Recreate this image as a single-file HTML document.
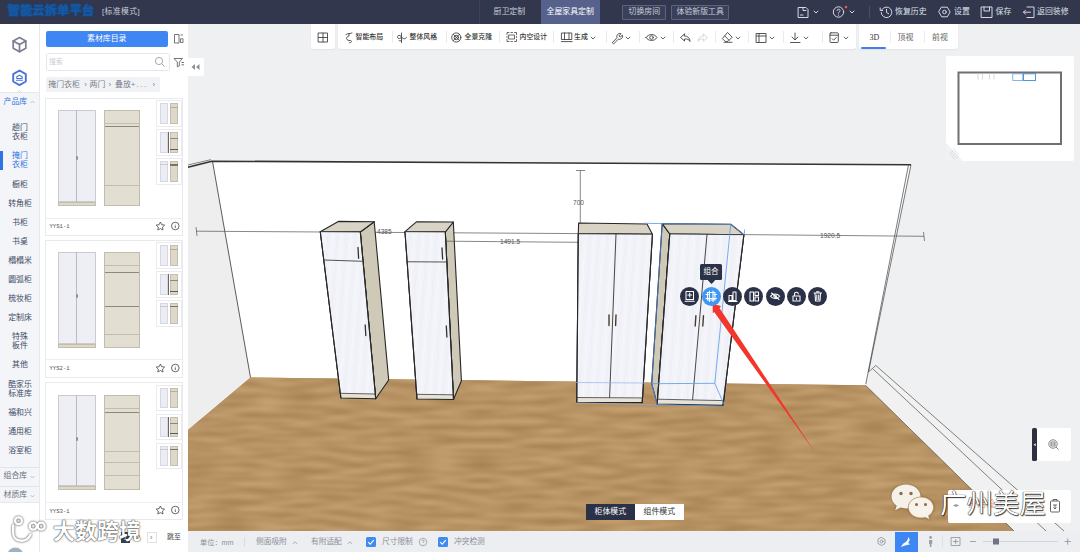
<!DOCTYPE html>
<html lang="zh-CN"><head><meta charset="utf-8"><title>全屋家具定制</title>
<style>
*{box-sizing:border-box;margin:0;padding:0}
html,body{width:1080px;height:552px;overflow:hidden}
body{position:relative;background:#eff0f2;font-family:"Liberation Sans","Noto Sans CJK SC",sans-serif;font-size:6.75px;color:#333;-webkit-text-size-adjust:none}
.abs{position:absolute}
.t{position:absolute;white-space:nowrap;line-height:1}
#hdr{position:absolute;left:0;top:0;width:1080px;height:24px;background:#32374d}
#hdr .t{color:#dfe2ea;font-size:7.9px}
#rail{position:absolute;left:0;top:24px;width:40px;height:528px;background:#fff;border-right:1px solid #e6e8ec}
#panel{position:absolute;left:40px;top:24px;width:148px;height:528px;background:#fff}
.ri{position:absolute;left:0;width:40px;text-align:center;font-size:7.9px;line-height:9.2px;color:#4a5168}
.card{position:absolute;left:5px;width:138px;border:1px solid #e8eaee;background:#fff}
.thumb{position:absolute;left:111px;width:26px;height:26px;border:1px solid #e4e6ea;background:#fff}
.tb{position:absolute;top:24px;height:25px;background:#fff;border-radius:0 0 3px 3px;box-shadow:0 1px 2px rgba(0,0,0,.06)}
.tb .t{font-size:6.9px;color:#333}
.sep{position:absolute;width:1px;background:#e9ebef}
#status{position:absolute;left:188px;top:531px;width:892px;height:21px;background:#eceef1}
#status .t{font-size:7.7px;color:#8a8f9a}
.cb{position:absolute;width:10px;height:10px;border-radius:1.5px;background:#3f8cf0}
.wm{position:absolute;white-space:nowrap;color:#fff;line-height:1}
</style></head><body>
<svg class="abs" style="left:0;top:0" width="1080" height="552" viewBox="0 0 1080 552">
<defs>
<filter id="wood" x="0" y="0" width="100%" height="100%" color-interpolation-filters="sRGB">
<feTurbulence type="fractalNoise" baseFrequency="0.028 0.16" numOctaves="1" seed="11"/>
<feColorMatrix type="matrix" values="0.18 0 0 0 0.628  0.18 0 0 0 0.482  0.18 0 0 0 0.298  0 0 0 0 1" />
<feComposite in2="SourceGraphic" operator="in"/>
</filter>
<linearGradient id="doorg" x1="0" y1="0" x2="1" y2="0">
<stop offset="0" stop-color="#eceef5"/><stop offset="0.5" stop-color="#f4f5fa"/><stop offset="1" stop-color="#eceef5"/>
</linearGradient>
<pattern id="wave" width="9" height="40" patternUnits="userSpaceOnUse" patternTransform="rotate(4)">
<rect width="9" height="40" fill="#f2f3f9"/>
<path d="M2 0c2 7-2 13 0 20s-2 13 0 20" fill="none" stroke="#edeff6" stroke-width="1.2"/>
<path d="M6.500 0c-2 6 2 14 0 20s2 14 0 20" fill="none" stroke="#f9f9fd" stroke-width="1"/>
</pattern>
</defs>
<!-- left wall -->
<polygon points="188,166 211.8,161.2 250.5,377.5 188,430" fill="#eeeeee"/>
<!-- back wall -->
<polygon points="212.5,161.3 911,164.8 867,377 865.5,385.5 250.5,377.5" fill="#ffffff"/>
<!-- right wall base / skirting -->
<polygon points="875.8,365.5 1064,531 1014,531 865.5,385.3 867,377" fill="#f1f1f2"/>
<!-- floor -->
<polygon id="floorp" points="250.5,377.5 865.5,385.3 1014,531 188,531 188,430" fill="#b8935f"/>
<polygon points="250.5,377.5 865.5,385.3 1014,531 188,531 188,430" fill="#b8935f" filter="url(#wood)"/>
<!-- wall outlines -->
<g fill="none" stroke="#333" stroke-width="1.2">
<polyline points="188,167.2 211.8,161.2 911,164.8" stroke-width="1.6" stroke-linejoin="round"/>
<line x1="212.5" y1="161.3" x2="250.5" y2="377.5" stroke-width=".8"/>
</g>
<g fill="none" stroke="#444" stroke-width="0.7">
<line x1="911" y1="164.8" x2="868.5" y2="372"/>
<line x1="908.5" y1="164.8" x2="865.8" y2="384"/>
</g>
<polyline points="188,165 211,159.6" fill="none" stroke="#555" stroke-width="0.7"/>
<g fill="none" stroke="#6a6a6a" stroke-width="0.85">
<line x1="875.8" y1="365.5" x2="1064" y2="531"/>
<line x1="873" y1="369" x2="1046" y2="531"/>
<line x1="865.5" y1="385.3" x2="1014" y2="531"/>
<line x1="875.8" y1="365.5" x2="868.5" y2="372"/>
</g>
<g stroke="#555" stroke-width="0.7" fill="none">
<line x1="196" y1="231.2" x2="578" y2="233.6"/>
<line x1="196" y1="227" x2="197" y2="236"/>
<line x1="744" y1="234.6" x2="924" y2="236.3"/>
<line x1="923.5" y1="232" x2="924.5" y2="241"/>
<line x1="580.3" y1="170.5" x2="580.3" y2="223"/>
<line x1="576" y1="170.5" x2="585" y2="170.5"/>
</g>
<g font-family="'Liberation Sans',sans-serif" font-size="6.6" fill="#555">
<text x="377" y="234">4385</text>
<text x="500" y="244">1491.5</text>
<text x="573" y="205">700</text>
<text x="820" y="237.8">1920.5</text>
</g>
<g><polygon points="360.3,232.0 374.2,221.7 388.7,380.0 375.7,398.7" fill="#cfc9b8" stroke="#262626" stroke-width="1.1" stroke-linejoin="round" /><polygon points="320.3,231.7 338.3,221.4 374.2,221.7 360.3,232.0" fill="#d8d3c4" stroke="#262626" stroke-width="1.1" stroke-linejoin="round" /><polygon points="320.3,231.7 360.3,232.0 375.7,398.7 340.9,398.0" fill="#e6e2d6" stroke="#262626" stroke-width="1.1" stroke-linejoin="round" /><polygon points="320.3,231.7 360.3,232.0 375.3,394.0 340.3,393.3" fill="url(#wave)" stroke="#262626" stroke-width="0.7" stroke-linejoin="round" /><line x1="323.8" y1="260.0" x2="361.7" y2="261.3" stroke="#555" stroke-width="1.1" stroke-linecap="round"/><line x1="358.0" y1="247.5" x2="358.6" y2="258.3" stroke="#333" stroke-width="1.3" stroke-linecap="round"/><line x1="365.2" y1="325.0" x2="365.8" y2="335.5" stroke="#333" stroke-width="1.3" stroke-linecap="round"/><line x1="320.3" y1="231.7" x2="340.9" y2="398.0" stroke="#262626" stroke-width="1.1" stroke-linecap="round"/><line x1="360.3" y1="232.0" x2="375.7" y2="398.7" stroke="#262626" stroke-width="1.1" stroke-linecap="round"/><polygon points="445.3,232.0 453.3,222.0 461.4,380.7 453.5,399.5" fill="#cfc9b8" stroke="#262626" stroke-width="1.1" stroke-linejoin="round" /><polygon points="405.0,231.7 416.7,221.7 453.3,222.0 445.3,232.0" fill="#d8d3c4" stroke="#262626" stroke-width="1.1" stroke-linejoin="round" /><polygon points="405.0,231.7 445.3,232.0 453.5,399.5 417.0,399.0" fill="#e6e2d6" stroke="#262626" stroke-width="1.1" stroke-linejoin="round" /><polygon points="405.0,231.7 445.3,232.0 453.3,394.8 416.7,394.3" fill="url(#wave)" stroke="#262626" stroke-width="0.7" stroke-linejoin="round" /><line x1="407.0" y1="261.7" x2="445.8" y2="262.0" stroke="#555" stroke-width="1.1" stroke-linecap="round"/><line x1="442.0" y1="248.0" x2="442.6" y2="259.0" stroke="#333" stroke-width="1.3" stroke-linecap="round"/><line x1="446.3" y1="326.0" x2="446.9" y2="337.0" stroke="#333" stroke-width="1.3" stroke-linecap="round"/><line x1="405.0" y1="231.7" x2="417.0" y2="399.0" stroke="#262626" stroke-width="1.1" stroke-linecap="round"/><line x1="445.3" y1="232.0" x2="453.5" y2="399.5" stroke="#262626" stroke-width="1.1" stroke-linecap="round"/></g><line x1="446.7" y1="241.2" x2="578" y2="242.3" stroke="#555" stroke-width="0.7"/><g><polygon points="578.3,233.8 578.6,223.0 647.0,224.0 652.4,234.3" fill="#d8d3c4" stroke="#262626" stroke-width="1.1" stroke-linejoin="round" /><polygon points="578.3,233.8 652.4,234.3 642.2,402.6 576.8,402.2" fill="#e6e2d6" stroke="#262626" stroke-width="1.1" stroke-linejoin="round" /><polygon points="578.3,233.8 652.4,234.3 642.5,397.9 576.8,397.5" fill="url(#wave)" stroke="#262626" stroke-width="0.7" stroke-linejoin="round" /><line x1="616.0" y1="234.2" x2="609.6" y2="397.4" stroke="#333" stroke-width="0.9" stroke-linecap="round"/><line x1="609.0" y1="315.0" x2="609.0" y2="325.5" stroke="#4a3a30" stroke-width="1.4" stroke-linecap="round"/><line x1="616.0" y1="315.0" x2="615.6" y2="325.5" stroke="#4a3a30" stroke-width="1.4" stroke-linecap="round"/><line x1="578.3" y1="233.8" x2="576.8" y2="402.2" stroke="#262626" stroke-width="1.1" stroke-linecap="round"/><line x1="652.4" y1="234.3" x2="642.2" y2="402.6" stroke="#262626" stroke-width="1.1" stroke-linecap="round"/><line x1="576.5" y1="382.5" x2="643.5" y2="383.0" stroke="#8db4ee" stroke-width="0.7" stroke-linecap="round"/><line x1="576.8" y1="403.0" x2="657.2" y2="404.8" stroke="#8db4ee" stroke-width="0.6" stroke-linecap="round"/></g><g><polygon points="662.2,223.6 669.8,234.0 657.2,404.0 651.7,383.7" fill="#cfc9b8" stroke="#262626" stroke-width="1.1" stroke-linejoin="round" /><polygon points="669.8,234.0 662.2,223.6 730.8,224.3 743.9,234.7" fill="#d8d3c4" stroke="#262626" stroke-width="1.1" stroke-linejoin="round" /><polygon points="669.8,234.0 743.9,234.7 723.0,405.4 657.2,404.0" fill="#e6e2d6" stroke="#262626" stroke-width="1.1" stroke-linejoin="round" /><polygon points="669.8,234.0 743.9,234.7 723.6,400.6 657.6,399.2" fill="url(#wave)" stroke="#262626" stroke-width="0.7" stroke-linejoin="round" /><line x1="707.0" y1="234.3" x2="692.6" y2="399.5" stroke="#333" stroke-width="0.9" stroke-linecap="round"/><line x1="695.9" y1="315.6" x2="695.2" y2="326.0" stroke="#4a3a30" stroke-width="1.4" stroke-linecap="round"/><line x1="703.5" y1="315.6" x2="702.8" y2="326.0" stroke="#4a3a30" stroke-width="1.4" stroke-linecap="round"/><line x1="669.8" y1="234.0" x2="657.2" y2="404.0" stroke="#262626" stroke-width="1.1" stroke-linecap="round"/><line x1="743.9" y1="234.7" x2="723.0" y2="405.4" stroke="#262626" stroke-width="1.1" stroke-linecap="round"/><line x1="662.2" y1="223.6" x2="651.7" y2="383.7" stroke="#4a78c0" stroke-width="0.9" stroke-linecap="round"/><g fill="none" stroke="#5b97ea" stroke-width="0.8" stroke-linejoin="round"><polyline points="730.8,224.3 714.8,383.3 724,404.5"/><polyline points="651.7,383.7 714.8,383.3"/><polyline points="651.7,383.7 657.2,404.6 724,406.2 "/><polyline points="644,223.3 662.2,223.6 730.8,224.3 743.9,234.7"/><polyline points="744.6,229.5 744.4,235"/></g></g><polygon points="712.6,303.8 721,306 719.6,308.2 815.3,452.8 714.2,312 712.8,313.2" fill="#f2362b"/></svg>
<div id="hdr"><div class="t" style="left:7.5px;top:4.5px;font-size:12.4px;color:#1259a6;font-weight:bold;letter-spacing:0;text-shadow:0 0 1.500px #1259a6,0 0 2.500px rgba(18,89,166,.7)">智能云拆单平台</div><div class="t" style="left:102px;top:8px;font-size:7.9px;color:#c9cdd8;letter-spacing:.35px">[标准模式]</div><div class="abs" style="left:479px;top:0;width:1px;height:24px;background:#3d435a"></div><div class="t" style="left:493.5px;top:8px;color:#c9cdd8">厨卫定制</div><div class="abs" style="left:541px;top:0;width:59px;height:24px;background:#56628b"></div><div class="t" style="left:546.5px;top:8px;color:#fff">全屋家具定制</div><div class="abs" style="left:622px;top:5px;width:44px;height:14.5px;border:1px solid #5b6380;border-radius:1px;background:#3a405a"></div><div class="t" style="left:628.5px;top:8.3px;color:#c9cdd8">切换房间</div><div class="abs" style="left:671px;top:5px;width:58px;height:14.5px;border:1px solid #5b6380;border-radius:1px;background:#3a405a"></div><div class="t" style="left:676.5px;top:8.3px;color:#c9cdd8">体验新版工具</div><svg class="abs" style="left:790px;top:0" width="290" height="24" viewBox="790 0 290 24" fill="none" stroke="#d5d8e2" stroke-width="1" stroke-linecap="round" stroke-linejoin="round">
<path d="M798.5 7.5h7.5l2 2v8h-9.500z"/><path d="M803 7.500v3h3"/><path d="M800.500 15h2.500"/>
<path d="M814 11l2 2 2-2"/>
<circle cx="838.500" cy="12" r="5.200"/><path d="M837 10.600c0-2 3-2 3 0 0 1.200-1.500 1.200-1.500 2.600"/><path d="M838.500 15v.3"/>
<circle cx="846" cy="7" r="1.300" fill="#f2553d" stroke="none"/>
<path d="M850 11l2 2 2-2"/>
<path d="M869.500 6v12" stroke="#4a5068"/>
<path d="M882 9.500a5.300 5.300 0 1 1-.8 3"/><path d="M880.200 8v2.500h2.500"/><path d="M886.500 9.300v3.200l2.200 1.300"/>
<path d="M941.700 7.200h5.600l2.800 4.800-2.800 4.800h-5.600l-2.800-4.800z"/><circle cx="944.500" cy="12" r="1.800"/>
<path d="M981.500 7h10.500v10.500h-10.500z"/><path d="M984 7v4h5.500v-4"/>
<path d="M1027 7h7v10.500h-7"/><path d="M1023.500 12.200h7"/><path d="M1025.500 10.200l-2 2 2 2"/>
</svg><div class="t" style="left:895px;top:8px">恢复历史</div><div class="t" style="left:954px;top:8px">设置</div><div class="t" style="left:995.5px;top:8px">保存</div><div class="t" style="left:1037px;top:8px">返回装修</div></div>
<div id="rail"><div class="abs" style="left:0;top:67.700px;width:39px;height:411px;background:#f3f5f8;border-top:1px solid #e6e8ec;border-bottom:1px solid #e6e8ec"></div><svg class="abs" style="left:0;top:0" width="40" height="70" viewBox="0 24 40 70" fill="none" stroke-linejoin="round" stroke-linecap="round">
<g stroke="#7a7f92" stroke-width="1.700"><path d="M19.500 37.500l6.300 3.400v7.300l-6.300 3.500-6.300-3.500v-7.300z"/><path d="M13.200 40.900l6.300 3.500 6.300-3.500M19.500 44.400v7.300"/></g>
<g stroke="#4a72d8" stroke-width="1.900"><path d="M19.500 70.500l6.300 3.600v7.400l-6.300 3.600-6.300-3.600v-7.400z"/></g>
<g stroke="#4a72d8" stroke-width="1.100"><path d="M16.800 78.500v-1.800l2.700-1.500 2.700 1.500v1.800z M16.500 80.200h6"/></g>
<path d="M17.500 92.500l2-2 2 2" stroke="#d8dbe2" stroke-width="1"/>
</svg><div class="ri" style="top:98.8px;color:#3f4a66">趟门<br>衣柜</div><div class="ri" style="top:127.2px;color:#2f74e6">掩门<br>衣柜</div><div class="ri" style="top:155.8px;color:#3f4a66">橱柜</div><div class="ri" style="top:174.8px;color:#3f4a66">转角柜</div><div class="ri" style="top:193.9px;color:#3f4a66">书柜</div><div class="ri" style="top:212.9px;color:#3f4a66">书桌</div><div class="ri" style="top:232.0px;color:#3f4a66">榻榻米</div><div class="ri" style="top:251.0px;color:#3f4a66">圆弧柜</div><div class="ri" style="top:270.0px;color:#3f4a66">梳妆柜</div><div class="ri" style="top:289.0px;color:#3f4a66">定制床</div><div class="ri" style="top:308.1px;color:#3f4a66">特殊<br>板件</div><div class="ri" style="top:336.4px;color:#3f4a66">其他</div><div class="ri" style="top:355.6px;color:#3f4a66">酷家乐<br>标准库</div><div class="ri" style="top:384.2px;color:#3f4a66">福和兴</div><div class="ri" style="top:403.2px;color:#3f4a66">通用柜</div><div class="ri" style="top:422.2px;color:#3f4a66">浴室柜</div><div class="abs" style="left:0;top:127px;width:2.500px;height:19px;background:#2f74e6"></div><div class="t" style="left:3.500px;top:73.7px;font-size:7.9px;color:#2f74e6">产品库</div><svg class="abs" style="left:30px;top:76.2px" width="5" height="4" viewBox="-.5 0 5 3" fill="none" stroke="#b0b5c2" stroke-width=".8"><path d="M0 2.500l2-2 2 2"/></svg><div class="abs" style="left:0;top:443px;width:39px;height:1px;background:#e1e4ea"></div><div class="t" style="left:3.500px;top:448.4px;font-size:7.9px;color:#6b7183">组合库</div><svg class="abs" style="left:30px;top:450.9px" width="5" height="4" viewBox="-.5 0 5 3" fill="none" stroke="#b0b5c2" stroke-width=".8"><path d="M0 .5l2 2 2-2"/></svg><div class="abs" style="left:0;top:462px;width:39px;height:1px;background:#e1e4ea"></div><div class="t" style="left:3.500px;top:467.0px;font-size:7.9px;color:#6b7183">材质库</div><svg class="abs" style="left:30px;top:469.5px" width="5" height="4" viewBox="-.5 0 5 3" fill="none" stroke="#b0b5c2" stroke-width=".8"><path d="M0 .5l2 2 2-2"/></svg></div>
<div id="panel"><div class="abs" style="left:6px;top:6.500px;width:122px;height:16.500px;background:#3f86f5;border-radius:2px"></div><div class="t" style="left:47px;top:10.800px;font-size:7.9px;color:#fff">素材库目录</div><svg class="abs" style="left:132px;top:8px" width="14" height="40" viewBox="172 32 14 40" fill="none" stroke="#666" stroke-width=".9">
<path d="M174.500 34.500h4.500v8.500h-4.500z"/><path d="M180.500 35h2.500M180.500 38.800h2.500v3.700h-2.500z"/>
<path d="M174 58.500h8.500l-3.200 3.500v4l-2 .8v-4.800z"/><path d="M181.500 62.500h2.500M181.500 64.800h2.500"/>
</svg><div class="abs" style="left:6px;top:29px;width:124px;height:17.500px;border:1px solid #e4e6ea;border-radius:1.500px"></div><div class="t" style="left:9px;top:34.500px;font-size:6.8px;color:#c8cbd2">搜索</div><svg class="abs" style="left:114px;top:32px" width="12" height="12" viewBox="0 0 12 12" fill="none" stroke="#9a9ea8" stroke-width=".9"><circle cx="5" cy="5" r="3.600"/><path d="M7.700 7.700l2.800 2.800"/></svg><div class="abs" style="left:6px;top:52.500px;width:114px;height:15.500px;background:#f1f2f5;border-radius:1.500px"></div><div class="t" style="left:8.3px;top:56.500px;font-size:7.9px;color:#7a7f8c">掩门衣柜</div><div class="t" style="left:44.2px;top:56.500px;font-size:7.9px;color:#7a7f8c">›</div><div class="t" style="left:49.5px;top:56.500px;font-size:7.9px;color:#7a7f8c">两门</div><div class="t" style="left:68.5px;top:56.500px;font-size:7.9px;color:#7a7f8c">›</div><div class="t" style="left:75.0px;top:56.500px;font-size:7.9px;color:#7a7f8c">叠放+</div><div class="t" style="left:96.5px;top:56.500px;font-size:7.9px;color:#7a7f8c"><span style="letter-spacing:1.6px">...</span></div><div class="t" style="left:112.5px;top:56.500px;font-size:7.9px;color:#7a7f8c">›</div><div class="card" style="top:74.2px;height:137.800px"></div><div class="abs" style="left:5px;top:193.7px;width:138px;height:1px;background:#eceef1"></div><div class="abs" style="left:17.7px;top:86.4px;width:38.0px;height:91.6px;background:#eeeef5;border:.6px solid #c9cad2"></div><div class="abs" style="left:17.7px;top:178.0px;width:38.0px;height:4px;background:#ded8c8;border:.5px solid #c4bead"></div><div class="abs" style="left:36.3px;top:86.4px;width:.8px;height:91.6px;background:#b9bac6"></div><div class="abs" style="left:35.5px;top:131.5px;width:2.400px;height:4px;border-radius:1px;background:#8d8f9a"></div><div class="abs" style="left:64.4px;top:86.4px;width:36.0px;height:95.6px;background:#e2ded2;border:.6px solid #c2bcab"></div><div class="abs" style="left:65.4px;top:99.4px;width:34.0px;height:0.7px;background:#c3bdac"></div><div class="abs" style="left:65.4px;top:101.9px;width:34.0px;height:1.3px;background:#8f8878"></div><div class="abs" style="left:65.4px;top:161.4px;width:34.0px;height:0.7px;background:#c3bdac"></div><div class="abs" style="left:116.0px;top:76.4px;width:26px;height:26.500px;border:1px solid #e9ebee;background:#fff"></div><div class="abs" style="left:119.5px;top:79.4px;width:8px;height:20.500px;background:#ececf5;border:.5px solid #d6d7df"></div><div class="abs" style="left:129.5px;top:79.4px;width:8.500px;height:20.500px;background:#ddd8ca;border:.5px solid #c4beae"></div><div class="abs" style="left:129.5px;top:82.9px;width:8.500px;height:.8px;background:#b5ae9c"></div><div class="abs" style="left:116.0px;top:105.4px;width:26px;height:26.500px;border:1px solid #e9ebee;background:#fff"></div><div class="abs" style="left:119.5px;top:108.4px;width:8px;height:20.500px;background:#ececf5;border:.5px solid #d6d7df"></div><div class="abs" style="left:129.5px;top:108.4px;width:8.500px;height:20.500px;background:#ddd8ca;border:.5px solid #c4beae"></div><div class="abs" style="left:128.0px;top:108.4px;width:1px;height:20.500px;background:#6b675d"></div><div class="abs" style="left:129.5px;top:114.4px;width:8.500px;height:.8px;background:#8f8878"></div><div class="abs" style="left:129.5px;top:124.9px;width:8.500px;height:1.200px;background:#5f5b52"></div><div class="abs" style="left:116.0px;top:134.4px;width:26px;height:26.500px;border:1px solid #e9ebee;background:#fff"></div><div class="abs" style="left:119.5px;top:137.4px;width:8px;height:20.500px;background:#ececf5;border:.5px solid #d6d7df"></div><div class="abs" style="left:129.5px;top:137.4px;width:8.500px;height:20.500px;background:#ddd8ca;border:.5px solid #c4beae"></div><div class="abs" style="left:129.5px;top:140.4px;width:8.500px;height:1.200px;background:#7a7466"></div><div class="abs" style="left:119.5px;top:140.4px;width:8px;height:.8px;background:#c9cad4"></div><div class="t" style="left:9.500px;top:200.4px;font-size:5.600px;color:#555;font-family:'Liberation Mono',monospace">YYS1-1</div><svg class="abs" style="left:115px;top:197.2px" width="26" height="10" viewBox="0 0 26 10" fill="none" stroke="#444" stroke-width=".8" stroke-linejoin="round"><path d="M5.400 1l1.300 2.700 2.900.4-2.100 2 .5 2.900-2.600-1.400-2.600 1.400.5-2.900-2.100-2 2.900-.4z"/><circle cx="20.300" cy="5" r="3.800"/><path d="M20.300 4.400v2.600M20.300 2.900v.3"/></svg><div class="card" style="top:215.8px;height:137.800px"></div><div class="abs" style="left:5px;top:335.3px;width:138px;height:1px;background:#eceef1"></div><div class="abs" style="left:17.7px;top:228.0px;width:38.0px;height:91.6px;background:#eeeef5;border:.6px solid #c9cad2"></div><div class="abs" style="left:17.7px;top:319.6px;width:38.0px;height:4px;background:#ded8c8;border:.5px solid #c4bead"></div><div class="abs" style="left:36.3px;top:228.0px;width:.8px;height:91.6px;background:#b9bac6"></div><div class="abs" style="left:35.5px;top:270.0px;width:2.400px;height:4px;border-radius:1px;background:#8d8f9a"></div><div class="abs" style="left:64.4px;top:228.0px;width:36.0px;height:95.6px;background:#e2ded2;border:.6px solid #c2bcab"></div><div class="abs" style="left:65.4px;top:241.0px;width:34.0px;height:0.7px;background:#c3bdac"></div><div class="abs" style="left:65.4px;top:248.0px;width:34.0px;height:1.3px;background:#8f8878"></div><div class="abs" style="left:65.4px;top:282.0px;width:34.0px;height:1.3px;background:#8f8878"></div><div class="abs" style="left:65.4px;top:310.0px;width:34.0px;height:0.7px;background:#c3bdac"></div><div class="abs" style="left:116.0px;top:218.0px;width:26px;height:26.500px;border:1px solid #e9ebee;background:#fff"></div><div class="abs" style="left:119.5px;top:221.0px;width:8px;height:20.500px;background:#ececf5;border:.5px solid #d6d7df"></div><div class="abs" style="left:129.5px;top:221.0px;width:8.500px;height:20.500px;background:#ddd8ca;border:.5px solid #c4beae"></div><div class="abs" style="left:129.5px;top:224.5px;width:8.500px;height:.8px;background:#b5ae9c"></div><div class="abs" style="left:116.0px;top:247.0px;width:26px;height:26.500px;border:1px solid #e9ebee;background:#fff"></div><div class="abs" style="left:119.5px;top:250.0px;width:8px;height:20.500px;background:#ececf5;border:.5px solid #d6d7df"></div><div class="abs" style="left:129.5px;top:250.0px;width:8.500px;height:20.500px;background:#ddd8ca;border:.5px solid #c4beae"></div><div class="abs" style="left:128.0px;top:250.0px;width:1px;height:20.500px;background:#6b675d"></div><div class="abs" style="left:129.5px;top:256.0px;width:8.500px;height:.8px;background:#8f8878"></div><div class="abs" style="left:129.5px;top:266.5px;width:8.500px;height:1.200px;background:#5f5b52"></div><div class="abs" style="left:116.0px;top:276.0px;width:26px;height:26.500px;border:1px solid #e9ebee;background:#fff"></div><div class="abs" style="left:119.5px;top:279.0px;width:8px;height:20.500px;background:#ececf5;border:.5px solid #d6d7df"></div><div class="abs" style="left:129.5px;top:279.0px;width:8.500px;height:20.500px;background:#ddd8ca;border:.5px solid #c4beae"></div><div class="abs" style="left:129.5px;top:282.0px;width:8.500px;height:1.200px;background:#7a7466"></div><div class="abs" style="left:119.5px;top:282.0px;width:8px;height:.8px;background:#c9cad4"></div><div class="t" style="left:9.500px;top:342.0px;font-size:5.600px;color:#555;font-family:'Liberation Mono',monospace">YYS2-1</div><svg class="abs" style="left:115px;top:338.8px" width="26" height="10" viewBox="0 0 26 10" fill="none" stroke="#444" stroke-width=".8" stroke-linejoin="round"><path d="M5.400 1l1.300 2.700 2.900.4-2.100 2 .5 2.900-2.600-1.400-2.600 1.400.5-2.900-2.100-2 2.900-.4z"/><circle cx="20.300" cy="5" r="3.800"/><path d="M20.300 4.400v2.600M20.300 2.900v.3"/></svg><div class="card" style="top:358.3px;height:137.800px"></div><div class="abs" style="left:5px;top:477.8px;width:138px;height:1px;background:#eceef1"></div><div class="abs" style="left:17.7px;top:370.5px;width:38.0px;height:91.6px;background:#eeeef5;border:.6px solid #c9cad2"></div><div class="abs" style="left:17.7px;top:462.1px;width:38.0px;height:4px;background:#ded8c8;border:.5px solid #c4bead"></div><div class="abs" style="left:36.3px;top:370.5px;width:.8px;height:91.6px;background:#b9bac6"></div><div class="abs" style="left:35.5px;top:412.5px;width:2.400px;height:4px;border-radius:1px;background:#8d8f9a"></div><div class="abs" style="left:64.4px;top:370.5px;width:36.0px;height:95.6px;background:#e2ded2;border:.6px solid #c2bcab"></div><div class="abs" style="left:65.4px;top:383.5px;width:34.0px;height:0.7px;background:#c3bdac"></div><div class="abs" style="left:65.4px;top:387.5px;width:34.0px;height:1.3px;background:#8f8878"></div><div class="abs" style="left:65.4px;top:426.5px;width:34.0px;height:0.7px;background:#c3bdac"></div><div class="abs" style="left:65.4px;top:437.5px;width:34.0px;height:0.7px;background:#c3bdac"></div><div class="abs" style="left:65.4px;top:450.5px;width:34.0px;height:0.7px;background:#c3bdac"></div><div class="abs" style="left:116.0px;top:360.5px;width:26px;height:26.500px;border:1px solid #e9ebee;background:#fff"></div><div class="abs" style="left:119.5px;top:363.5px;width:8px;height:20.500px;background:#ececf5;border:.5px solid #d6d7df"></div><div class="abs" style="left:129.5px;top:363.5px;width:8.500px;height:20.500px;background:#ddd8ca;border:.5px solid #c4beae"></div><div class="abs" style="left:129.5px;top:367.0px;width:8.500px;height:.8px;background:#b5ae9c"></div><div class="abs" style="left:116.0px;top:389.5px;width:26px;height:26.500px;border:1px solid #e9ebee;background:#fff"></div><div class="abs" style="left:119.5px;top:392.5px;width:8px;height:20.500px;background:#ececf5;border:.5px solid #d6d7df"></div><div class="abs" style="left:129.5px;top:392.5px;width:8.500px;height:20.500px;background:#ddd8ca;border:.5px solid #c4beae"></div><div class="abs" style="left:128.0px;top:392.5px;width:1px;height:20.500px;background:#6b675d"></div><div class="abs" style="left:129.5px;top:398.5px;width:8.500px;height:.8px;background:#8f8878"></div><div class="abs" style="left:129.5px;top:409.0px;width:8.500px;height:1.200px;background:#5f5b52"></div><div class="abs" style="left:116.0px;top:418.5px;width:26px;height:26.500px;border:1px solid #e9ebee;background:#fff"></div><div class="abs" style="left:119.5px;top:421.5px;width:8px;height:20.500px;background:#ececf5;border:.5px solid #d6d7df"></div><div class="abs" style="left:129.5px;top:421.5px;width:8.500px;height:20.500px;background:#ddd8ca;border:.5px solid #c4beae"></div><div class="abs" style="left:129.5px;top:424.5px;width:8.500px;height:1.200px;background:#7a7466"></div><div class="abs" style="left:119.5px;top:424.5px;width:8px;height:.8px;background:#c9cad4"></div><div class="t" style="left:9.500px;top:484.5px;font-size:5.600px;color:#555;font-family:'Liberation Mono',monospace">YYS3-1</div><svg class="abs" style="left:115px;top:481.3px" width="26" height="10" viewBox="0 0 26 10" fill="none" stroke="#444" stroke-width=".8" stroke-linejoin="round"><path d="M5.400 1l1.300 2.700 2.900.4-2.100 2 .5 2.900-2.600-1.400-2.600 1.400.5-2.900-2.100-2 2.900-.4z"/><circle cx="20.300" cy="5" r="3.800"/><path d="M20.300 4.400v2.600M20.300 2.900v.3"/></svg><div class="abs" style="left:81px;top:508px;width:9px;height:11px;background:#3a3f52"></div><div class="t" style="left:83.500px;top:510.500px;font-size:6.500px;color:#fff">1</div><div class="t" style="left:96.500px;top:510.500px;font-size:6.500px;color:#555">2</div><div class="abs" style="left:107px;top:508px;width:10px;height:11px;border:1px solid #e0e2e6"></div><div class="t" style="left:110px;top:509.500px;font-size:7px;color:#666">›</div><div class="t" style="left:127px;top:510px;font-size:6.900px;color:#444">跳至</div></div>
<div class="abs" style="left:188px;top:57.500px;width:16px;height:18.500px;background:#fff;border-radius:0 2px 2px 0"></div><svg class="abs" style="left:191px;top:63px" width="10" height="8" viewBox="0 0 10 8" fill="#8b909d"><path d="M4 1v6l-3.500-3zM8.500 1v6l-3.500-3z"/></svg><div class="tb" style="left:311px;width:23.500px"></div><div class="tb" style="left:338px;width:518px"></div><div class="tb" style="left:859px;width:98.500px"></div><svg class="abs" style="left:300px;top:24px" width="560" height="25" viewBox="300 24 560 25" fill="none" stroke="#444" stroke-width=".9" stroke-linecap="round" stroke-linejoin="round">
<path d="M318.500 33h9v9h-9z M323 33v9 M318.500 37.500h9"/>
<path d="M346 34.500c2-1.500 4-.5 6-1.500M349 33.500v2.500c-3 .5-3.500 4 0 4.500h1.500c1.500 0 1.500 2.300-1 2.300" />
<path d="M401.500 33v9.500M401.500 37c-1-2.500-4-2-4 0s3 2 4 0c1 2 4 2.500 5 .5M399 40.500c1 .8 2 .5 2.500-.5"/>
<circle cx="456.300" cy="37.500" r="4.600"/><path d="M453.200 34.300l6.300 6.300M459.500 34.300l-6.300 6.300"/><circle cx="456.300" cy="37.500" r="2.200"/>
<path d="M507 34.500v-2h2M514.500 32.500h2v2M516.500 39.500v2h-2M509 41.500h-2v-2M511 32.500h1.500M511 41.500h1.500M507 36.500v1M516.500 36.500v1" stroke-width=".8"/><path d="M509 35h5.500v4h-5.500z" stroke-width=".8"/>
<path d="M561.800 33h10v6.500h-10zM564.500 33v6.500M569 33v6.500M561.500 41.600h10.600"/>
<path d="M612.500 42.500l4.500-4.800c-1-2.500 1.500-5 4-4l-2 2.200 1.200 1.200 2.200-2c1 2.500-1.500 5-4 4l-4.600 4.600z"/>
<path d="M646 37.500c2.500-4 8.500-4 11 0-2.500 4-8.500 4-11 0z"/><circle cx="651.500" cy="37.500" r="1.800"/>
<path d="M684.500 34l-4 3.500 4 3.500v-2c3-.3 4.500.5 5.500 2.500 0-3.500-2-5.500-5.500-5.500z"/>
<path d="M703.500 34l4 3.500-4 3.500v-2c-3-.3-4.500.5-5.500 2.500 0-3.500 2-5.500 5.500-5.500z" stroke="#d0d2d8"/>
<path d="M727.800 32.800l4.400 4.400-4.200 4.200h-2.800l-2.600-2.600z M724.800 36l4.200 4.200M724 42.300h8"/>
<path d="M756.500 33.500h9.500v9h-9.500z M759 33.500v9M756.500 36h9.500"/>
<path d="M795 33v6.500M792 37l3 3 3-3M790.500 42.500h9.500"/>
<rect x="830" y="32.800" width="8.300" height="9.700" rx="1"/><path d="M830 35.200h8.300M832.300 38.800l1.400 1.400 2.600-2.800"/>
</svg><svg class="abs" style="left:590.0px;top:35.500px" width="6" height="4" viewBox="0 0 6 4" fill="none" stroke="#555" stroke-width=".9"><path d="M.8.8l2.200 2.200 2.200-2.200"/></svg><svg class="abs" style="left:625.0px;top:35.500px" width="6" height="4" viewBox="0 0 6 4" fill="none" stroke="#555" stroke-width=".9"><path d="M.8.8l2.200 2.200 2.200-2.200"/></svg><svg class="abs" style="left:659.5px;top:35.500px" width="6" height="4" viewBox="0 0 6 4" fill="none" stroke="#555" stroke-width=".9"><path d="M.8.8l2.200 2.200 2.200-2.200"/></svg><svg class="abs" style="left:734.5px;top:35.500px" width="6" height="4" viewBox="0 0 6 4" fill="none" stroke="#555" stroke-width=".9"><path d="M.8.8l2.200 2.200 2.200-2.200"/></svg><svg class="abs" style="left:769.0px;top:35.500px" width="6" height="4" viewBox="0 0 6 4" fill="none" stroke="#555" stroke-width=".9"><path d="M.8.8l2.200 2.200 2.200-2.200"/></svg><svg class="abs" style="left:802.5px;top:35.500px" width="6" height="4" viewBox="0 0 6 4" fill="none" stroke="#555" stroke-width=".9"><path d="M.8.8l2.200 2.200 2.200-2.200"/></svg><svg class="abs" style="left:842.5px;top:35.500px" width="6" height="4" viewBox="0 0 6 4" fill="none" stroke="#555" stroke-width=".9"><path d="M.8.8l2.200 2.200 2.200-2.200"/></svg><div class="sep" style="left:392.0px;top:31px;height:12px"></div><div class="sep" style="left:446.0px;top:31px;height:12px"></div><div class="sep" style="left:499.0px;top:31px;height:12px"></div><div class="sep" style="left:552.5px;top:31px;height:12px"></div><div class="sep" style="left:605.5px;top:31px;height:12px"></div><div class="sep" style="left:639.0px;top:31px;height:12px"></div><div class="sep" style="left:673.0px;top:31px;height:12px"></div><div class="sep" style="left:715.0px;top:31px;height:12px"></div><div class="sep" style="left:748.0px;top:31px;height:12px"></div><div class="sep" style="left:783.0px;top:31px;height:12px"></div><div class="sep" style="left:822.0px;top:31px;height:12px"></div><div class="sep" style="left:889.5px;top:31px;height:12px"></div><div class="sep" style="left:923.5px;top:31px;height:12px"></div><div class="tb" style="background:none;box-shadow:none;left:0;width:1080px"><div class="t" style="left:355.5px;top:10.200px;font-weight:500;color:#333">智能布局</div><div class="t" style="left:409.5px;top:10.200px;font-weight:500;color:#333">整体风格</div><div class="t" style="left:464.5px;top:10.200px;font-weight:500;color:#333">全景克隆</div><div class="t" style="left:519.5px;top:10.200px;font-weight:500;color:#333">内空设计</div><div class="t" style="left:574.0px;top:10.200px;font-weight:500;color:#333">生成</div><div class="t" style="left:869.500px;top:9.500px;font-size:8px;color:#333;font-family:'Liberation Serif',serif">3D</div><div class="t" style="left:897.500px;top:9.800px;font-size:7.900px;color:#666">顶视</div><div class="t" style="left:932px;top:9.800px;font-size:7.900px;color:#666">前视</div><div class="abs" style="left:861px;top:23px;width:25px;height:1.500px;background:#3f7fe8;border-radius:1px"></div></div>
<div class="abs" style="left:946px;top:56px;width:127.500px;height:105px;background:#fff;border-radius:2px"></div><svg class="abs" style="left:946px;top:56px" width="128" height="105" viewBox="946 56 128 105" fill="none">
<path d="M946 143v18h17z" fill="#f1f2f4"/>
<path d="M949 153.500l6 6M950 151.500l7 7M951.500 150l7 7M953 148.500l6 6" stroke="#c8cad0" stroke-width=".6"/>
<rect x="958.500" y="72.500" width="102.500" height="71.500" fill="#fff" stroke="#707070" stroke-width="2"/>
<path d="M978 73.500v6M982.500 73.500v6M989.500 73.500v6M994 73.500v6" stroke="#c9c9c9" stroke-width=".7"/>
<rect x="1012.800" y="73.800" width="10" height="6.700" stroke="#6aa0e8" stroke-width=".8"/>
<rect x="1023.500" y="73.800" width="12" height="6.700" stroke="#3f8ad8" stroke-width=".9"/>
</svg><div class="abs" style="left:700px;top:264px;width:22px;height:16px;background:#2b3147;border-radius:1.500px"></div><div class="abs" style="left:708.700px;top:278px;width:5px;height:5px;background:#2b3147;transform:rotate(45deg)"></div><div class="t" style="left:703.400px;top:268.200px;font-size:7.600px;color:#fff">组合</div><div class="abs" style="left:680.2px;top:286.700px;width:19px;height:19px;border-radius:50%;background:#2b3147"></div><div class="abs" style="left:701.7px;top:286.700px;width:19px;height:19px;border-radius:50%;background:#3f97f2"></div><div class="abs" style="left:723.0px;top:286.700px;width:19px;height:19px;border-radius:50%;background:#2b3147"></div><div class="abs" style="left:744.4px;top:286.700px;width:19px;height:19px;border-radius:50%;background:#2b3147"></div><div class="abs" style="left:765.6px;top:286.700px;width:19px;height:19px;border-radius:50%;background:#2b3147"></div><div class="abs" style="left:786.9px;top:286.700px;width:19px;height:19px;border-radius:50%;background:#2b3147"></div><div class="abs" style="left:808.1px;top:286.700px;width:19px;height:19px;border-radius:50%;background:#2b3147"></div><svg class="abs" style="left:680px;top:286px" width="148" height="21" viewBox="680 286 148 21" fill="none" stroke="#fff" stroke-width="1.050" stroke-linejoin="round" stroke-linecap="round">
<path d="M686 291.500h7.500v8h-7.500zM685.200 301.200h9M689.700 293v4M687.800 295h3.800"/>
<path d="M707.500 292.500h7.500v7.500h-7.500zM706 294.500h2.500M714 294.500h2.500M709.500 291v10.500M713 291v10.500M706 298.500h10.500"/>
<path d="M729 295.500h3v5h-3zM733 292h3v8.500h-3zM728.500 301.500h8.500"/>
<path d="M750 292h3.500v9h-3.500zM755 292h3.500v3.500h-3.500zM755 297h3.500v4h-3.500z"/>
<path d="M770.500 296.200c2-3 7-3 9.200 0-2.200 3-7.200 3-9.200 0zM771.500 293l7.500 6.500"/><circle cx="775.100" cy="296.200" r="1.300"/>
<path d="M793 296h7v5h-7zM794.500 296v-2c0-2.200 3.800-2.200 3.800 0M796.400 298v1.500"/>
<path d="M814 293h7.500M815 293l.5 8h4.500l.5-8M816.500 291.800h2.500M816.800 295v4.500M818.700 295v4.500"/>
</svg><div class="abs" style="left:586px;top:504px;width:49px;height:16px;background:#2b3147"></div><div class="abs" style="left:635px;top:504px;width:49px;height:16px;background:#fff"></div><div class="t" style="left:594.500px;top:508.300px;font-size:7.900px;color:#fff">柜体模式</div><div class="t" style="left:643.500px;top:508.300px;font-size:7.900px;color:#333">组件模式</div><div class="abs" style="left:1032px;top:428.300px;width:39px;height:33px;background:#fff;border-radius:2px"></div><div class="abs" style="left:1031.600px;top:428.300px;width:5.500px;height:33px;background:#2d3040;border-radius:1.500px"></div><svg class="abs" style="left:1032px;top:438px" width="36" height="14" viewBox="1032 438 36 14" fill="none" stroke="#666" stroke-width=".8"><path d="M1035.700 443.200v3l-2-1.500z" fill="#fff" stroke="none"/><circle cx="1053" cy="444" r="4.200"/><path d="M1056 447l2.500 2.500M1051 442h4v4h-4zM1051 444h4"/></svg><div class="abs" style="left:948px;top:490px;width:123px;height:32.500px;background:#fff;border-radius:2px"></div><svg class="abs" style="left:1046px;top:497px" width="18" height="18" viewBox="0 0 18 18" fill="none" stroke="#555" stroke-width=".9"><rect x="4.500" y="4" width="9" height="11" rx="1"/><path d="M7 4v-1.500h4v1.500M7 8h4M9 8v4M7.500 10.500l1.500 1.500 1.500-1.500"/></svg><div class="t" style="left:953px;top:502px;font-size:6px;color:#999">◂▸</div><div class="t" style="left:968px;top:500px;font-size:9px;color:#f0a090">开始设计</div><div id="status"><div class="t" style="left:12px;top:7.500px;font-size:7.200px">单位：mm</div><div class="sep" style="left:56px;top:6px;height:10px;background:#d9dce1"></div><div class="t" style="left:68px;top:7.300px">侧面吸附</div><div class="t" style="left:123px;top:7.300px">有附适配</div><svg class="abs" style="left:104.0px;top:9.500px" width="6" height="4" viewBox="0 0 6 4" fill="none" stroke="#9a9fa9" stroke-width=".8"><path d="M.8 3l2.200-2.200 2.200 2.200"/></svg><svg class="abs" style="left:159.0px;top:9.500px" width="6" height="4" viewBox="0 0 6 4" fill="none" stroke="#9a9fa9" stroke-width=".8"><path d="M.8 3l2.200-2.200 2.200 2.200"/></svg><div class="cb" style="left:177.7px;top:5.800px"></div><svg class="abs" style="left:177.7px;top:5.800px" width="10" height="10" viewBox="0 0 9 9" fill="none" stroke="#fff" stroke-width="1"><path d="M2 4.600l1.800 1.800 3.200-3.600"/></svg><div class="cb" style="left:249.7px;top:5.800px"></div><svg class="abs" style="left:249.7px;top:5.800px" width="10" height="10" viewBox="0 0 9 9" fill="none" stroke="#fff" stroke-width="1"><path d="M2 4.600l1.800 1.800 3.200-3.600"/></svg><div class="t" style="left:194px;top:7.300px">尺寸限制</div><svg class="abs" style="left:229.500px;top:6px" width="10" height="10" viewBox="0 0 10 10" fill="none" stroke="#8a8f9a" stroke-width=".7"><circle cx="5" cy="5" r="3.800"/><path d="M3.900 4.100c0-1.500 2.300-1.500 2.300 0 0 .9-1.100.9-1.100 1.900M5.100 7.100v.3"/></svg><div class="t" style="left:266px;top:7.300px">冲突检测</div><div class="abs" style="left:707px;top:1px;width:23px;height:20px;background:#3f86f5"></div><svg class="abs" style="left:680px;top:0" width="212" height="21" viewBox="868 531 212 21" fill="none" stroke="#8a8f9a" stroke-width=".8" stroke-linejoin="round" stroke-linecap="round">
<path d="M881.500 537.500l3.500 2v4l-3.500 2-3.500-2v-4z"/><circle cx="881.500" cy="541.500" r="1.500"/>
<path d="M901 547c1-2 2-3.500 4-4.500 1.500-1 3-2.500 3.500-5.500 1.500 2 1.500 4-.5 6 1 .3 1.500.8 2 1.500-3 0-5 1-9 2.500z" fill="#fff" stroke="none"/>
<circle cx="930.600" cy="537.500" r="1.400" fill="#9a9fa9" stroke="none"/><path d="M929 540h3.200v4h-.8v3h-1.600v-3h-.8z" fill="#9a9fa9" stroke="none"/>
<path d="M942.500 536v11" stroke="#d9dce1"/>
<path d="M951.500 537.500h8.500v8h-8.500zM953.500 541.500h4.500M955.700 539.500v4"/>
<path d="M970.500 541.500h5"/>
<path d="M983.500 541.500h74" stroke="#c9ccd3"/>
<rect x="993" y="538.500" width="6" height="6" fill="#6f7484" stroke="none"/>
<path d="M1065 541.500h5.500M1067.700 538.800v5.500"/>
</svg></div>
<svg class="abs" style="left:0;top:505px" width="60" height="47" viewBox="0 505 60 47" fill="none">
<circle cx="15.300" cy="555.500" r="8" fill="#9fb2c4"/>
<g stroke="#fff" stroke-width="2.300" stroke-linecap="round" style="filter:drop-shadow(0 0 1.300px rgba(0,0,0,.8))">
<circle cx="18.500" cy="520.800" r="3.400"/><path d="M13.200 525.500v7.500c0 9 13 11 17.500 1.500"/><circle cx="33.200" cy="526.200" r="3.500"/><circle cx="41.200" cy="526.200" r="3.500"/></g></svg><div class="wm" style="left:53px;top:520.500px;font-size:22px;font-weight:bold;text-shadow:0 0 2px rgba(0,0,0,.7),0 0 1px rgba(0,0,0,.8)">大数跨境</div><svg class="abs" style="left:888px;top:480px" width="50" height="44" viewBox="888 480 50 44">
<g style="filter:drop-shadow(0 0 1px rgba(0,0,0,.35))">
<path d="M906 484.500c-8 0-14.500 5.300-14.500 12 0 3.700 2 7 5.200 9.200l-1.500 4.600 5.300-2.700c1.700.5 3.500.8 5.500.8 8 0 14.500-5.300 14.500-12s-6.500-11.900-14.500-11.900z" fill="#f6f1e8"/>
<path d="M921 497c-7 0-12.700 4.700-12.700 10.500s5.700 10.500 12.700 10.500c1.500 0 3-.2 4.300-.6l4.500 2.300-1.200-3.900c3-1.900 5-4.900 5-8.300 0-5.800-5.700-10.500-12.600-10.500z" fill="#f8f3ea" stroke="#b08a5a" stroke-width=".8"/>
</g>
<circle cx="901" cy="493.500" r="1.700" fill="#8a6a40"/><circle cx="911" cy="493.500" r="1.700" fill="#8a6a40"/>
<circle cx="916.500" cy="504.500" r="1.500" fill="#8a6a40"/><circle cx="925.500" cy="504.500" r="1.500" fill="#8a6a40"/>
</svg><div class="wm" style="left:940px;top:490.500px;font-size:26.500px;letter-spacing:0;text-shadow:.8px .8px 1px rgba(0,0,0,.75),0 0 1.200px rgba(0,0,0,.9),0 0 .5px #000">广州美屋</div></body></html>
